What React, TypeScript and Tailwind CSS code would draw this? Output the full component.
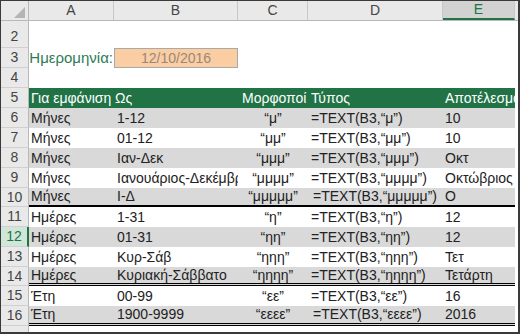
import React from "react";

const cols = [
  { key: "A", w: "w-[85px]" },
  { key: "B", w: "w-[124px]" },
  { key: "C", w: "w-[70px]" },
  { key: "D", w: "w-[135px]" },
  { key: "E", w: "w-[72px]" },
];

type Row = {
  n: number;
  a: string;
  b: string;
  c: string;
  d: string;
  e: string;
  h: string;
  gray: boolean;
  shift?: boolean;
  line?: "thick" | "double";
};

const rows: Row[] = [
  { n: 6, a: "Μήνες", b: "1-12", c: "“μ”", d: "=TEXT(B3,“μ”)", e: "10", h: "h-[20px]", gray: true },
  { n: 7, a: "Μήνες", b: "01-12", c: "“μμ”", d: "=TEXT(B3,“μμ”)", e: "10", h: "h-[20px]", gray: false },
  { n: 8, a: "Μήνες", b: "Ιαν-Δεκ", c: "“μμμ”", d: "=TEXT(B3,“μμμ”)", e: "Οκτ", h: "h-[20px]", gray: true },
  { n: 9, a: "Μήνες", b: "Ιανουάριος-Δεκέμβριος", c: "“μμμμ”", d: "=TEXT(B3,“μμμμ”)", e: "Οκτώβριος", h: "h-[20px]", gray: false },
  { n: 10, a: "Μήνες", b: "Ι-Δ", c: "“μμμμμ”", d: "=TEXT(B3,“μμμμμ”)", e: "Ο", h: "h-[19px]", gray: true, shift: true, line: "thick" },
  { n: 11, a: "Ημέρες", b: "1-31", c: "“η”", d: "=TEXT(B3,“η”)", e: "12", h: "h-[20px]", gray: false },
  { n: 12, a: "Ημέρες", b: "01-31", c: "“ηη”", d: "=TEXT(B3,“ηη”)", e: "12", h: "h-[20px]", gray: true },
  { n: 13, a: "Ημέρες", b: "Κυρ-Σάβ", c: "“ηηη”", d: "=TEXT(B3,“ηηη”)", e: "Τετ", h: "h-[20px]", gray: false },
  { n: 14, a: "Ημέρες", b: "Κυριακή-Σάββατο", c: "“ηηηη”", d: "=TEXT(B3,“ηηηη”)", e: "Τετάρτη", h: "h-[19px]", gray: true, line: "double" },
  { n: 15, a: "Έτη", b: "00-99", c: "“εε”", d: "=TEXT(B3,“εε”)", e: "16", h: "h-[20px]", gray: false },
  { n: 16, a: "Έτη", b: "1900-9999", c: "“εεεε”", d: "=TEXT(B3,“εεεε”)", e: "2016", h: "h-[20px]", gray: true, shift: true, line: "double" },
];

function RowHead({ n, selected }: { n?: number; selected?: boolean }) {
  return (
    <div
      className={
        "w-[28px] shrink-0 flex items-center justify-center border-b border-b-[#d0d0d0] text-[14px] " +
        (selected
          ? "bg-[#cfe6d8] text-[#217346] border-r-2 border-r-[#217346]"
          : "bg-[#e9e9e9] text-[#444] border-r border-r-[#b8b8b8]")
      }
    >
      {n}
    </div>
  );
}

function DataRow({ r }: { r: Row }) {
  const line =
    r.line === "thick"
      ? "border-b-2 border-black"
      : r.line === "double"
        ? "border-b-[3px] border-double border-black"
        : "";
  return (
    <div className={"flex " + r.h}>
      <RowHead n={r.n} selected={r.n === 12} />
      <div className={"flex text-[14px] text-[#222] " + line + (r.gray ? " bg-[#d9d9d9]" : " bg-white")}>
        <div className="w-[85px] pl-[2px] flex items-center whitespace-nowrap overflow-hidden">{r.a}</div>
        <div className="w-[124px] pl-[3px] flex items-center whitespace-nowrap overflow-hidden">{r.b}</div>
        <div className="w-[70px] flex items-center justify-center whitespace-nowrap">{r.c}</div>
        <div className={"w-[135px] flex items-center whitespace-nowrap " + (r.shift ? "pl-[5px]" : "pl-[3px]")}>
          {r.d}
        </div>
        <div className="w-[72px] pl-[2px] flex items-center whitespace-nowrap overflow-hidden">{r.e}</div>
      </div>
    </div>
  );
}

export default function App() {
  return (
    <div className="w-[520px] h-[334px] overflow-hidden bg-white border-t border-l border-[#3a3a3a] border-r-2 border-b-2 font-['Liberation_Sans',Arial,sans-serif]">
      {/* column headers */}
      <div className="flex h-[20px] bg-[#e9e9e9] border-b border-[#b8b8b8]">
        <div className="w-[28px] shrink-0 border-r border-[#b8b8b8] relative">
          <svg className="absolute left-[13px] top-[6px]" width="11" height="11" viewBox="0 0 11 11">
            <polygon points="11,0 11,11 0,11" fill="#b4b4b4" />
          </svg>
        </div>
        {cols.map((c) => (
          <div
            key={c.key}
            className={
              c.w +
              " shrink-0 flex items-center justify-center text-[14px] border-r border-[#c8c8c8] " +
              (c.key === "E" ? "bg-[#d2d2d2] text-[#217346] border-b-2 border-b-[#217346]" : "text-[#444]")
            }
          >
            {c.key}
          </div>
        ))}
        <div className="flex-1" />
      </div>

      {/* row 2 */}
      <div className="flex h-[27px]">
        <div className="w-[28px] shrink-0 flex items-end justify-center bg-[#e9e9e9] border-r border-b border-r-[#b8b8b8] border-b-[#d0d0d0] text-[14px] text-[#444]">
          2
        </div>
      </div>

      {/* row 3 */}
      <div className="flex h-[20px]">
        <RowHead n={3} />
        <div className="w-[85px] flex items-center justify-end pr-[1px] text-[15px] text-[#2e7b58] whitespace-nowrap">
          Ημερομηνία:
        </div>
        <div className="w-[124px] flex items-center justify-center bg-[#fbcda2] border border-[#a9a9a9] text-[14px] text-[#97887b]">
          12/10/2016
        </div>
      </div>

      {/* row 4 */}
      <div className="flex h-[20px]">
        <RowHead n={4} />
      </div>

      {/* row 5 header */}
      <div className="flex h-[20px]">
        <RowHead n={5} />
        <div className="flex bg-[#217346] text-white text-[14px]">
          <div className="w-[209px] pl-[2px] flex items-center whitespace-nowrap">Για εμφάνιση Ως</div>
          <div className="w-[70px] pl-[4px] flex items-center whitespace-nowrap">Μορφοποί</div>
          <div className="w-[135px] pl-[3px] flex items-center whitespace-nowrap">Τύπος</div>
          <div className="w-[72px] pl-[2px] flex items-center whitespace-nowrap overflow-hidden">Αποτέλεσμα</div>
        </div>
      </div>

      {rows.map((r) => (
        <DataRow key={r.n} r={r} />
      ))}

      {/* row 17 partial */}
      <div className="flex h-[10px]">
        <div className="w-[28px] shrink-0 bg-[#e9e9e9] border-r border-[#b8b8b8]" />
      </div>
    </div>
  );
}
